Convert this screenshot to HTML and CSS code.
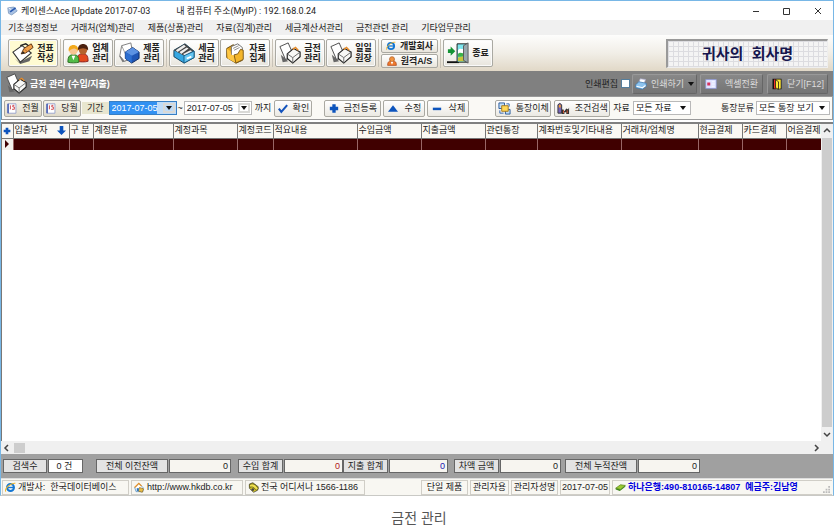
FILE: index.html
```html
<!DOCTYPE html>
<html lang="ko">
<head>
<meta charset="utf-8">
<title>금전 관리</title>
<link rel="stylesheet" href="styles.css">
</head>
<body>
<svg class="defs" aria-hidden="true">
  <symbol id="note" viewBox="0 0 24 24"><path d="M3 18l5 4 14-7-3 6-10 3z" fill="#666"/><path d="M1 11l10-7 10 8-12 10z" fill="#fff" stroke="#333" stroke-width="1.2"/><path d="M9 4l6-2 6 4" fill="none" stroke="#222" stroke-width="1.500"/><path d="M10 13l3-6 8-5 2 4-8 6z" fill="#f0a04a" stroke="#5a3010"/><path d="M10 13l2-3 2 2z" fill="#222"/><path d="M14 8l3 3" stroke="#a75a20"/></symbol>
  <symbol id="people" viewBox="0 0 24 24"><path d="M11 21c0-7 2-8 6-8s6 1 6 8c-3 1-9 1-12 0z" fill="#e2481c" stroke="#822"/><circle cx="17.500" cy="9" r="4.500" fill="#b4622c"/><path d="M12 9C11 0 24 0 23 9c-3-3-8-3-11 0z" fill="#4a200f"/><path d="M1 22c0-7 2-8 6-8s6 1 6 8c-3 1-9 1-12 0z" fill="#52bc48" stroke="#276b20"/><circle cx="7" cy="9" r="4.800" fill="#f6c592"/><path d="M2 10C0 1 14 1 12 10 10 6 6 6 2 10z" fill="#f3a91c"/><path d="M5 15l2 5 2-5z" fill="#fff"/></symbol>
  <symbol id="box3d" viewBox="0 0 24 24"><path d="M1 15l4 7 8-3" fill="#777"/><path d="M4 4l10-3 3 16-10 4-5-6z" fill="#fff" stroke="#777"/><path d="M4 4l5 11" stroke="#999"/><path d="M8 11l8-5 7 5v7l-8 5-7-5z" fill="#1f55b4" stroke="#0b2559"/><path d="M8 11l8-5 7 5-8 4z" fill="#5c92e2"/><path d="M8 11l7 4v8l-7-5z" fill="#2d6fd0"/></symbol>
  <symbol id="drawer" viewBox="0 0 24 24"><path d="M1 9L13 2l10 8v7l-11 6L1 16z" fill="#35a7e2" stroke="#123c58"/><path d="M1 9L13 2l10 8-11 5z" fill="#444"/><path d="M3 9l9-6 2 2-9 6zM7 11l8-5 2 1-8 6zM11 13l8-4 2 1-8 5z" fill="#eee"/><path d="M12 15l11-5v7l-11 6z" fill="#66c6f2" stroke="#155b86"/><path d="M15 18l5-2" stroke="#fff" stroke-width="2"/></symbol>
  <symbol id="folder" viewBox="0 0 24 24"><path d="M3 7l7-4 10 6v11l-7 3L3 17z" fill="#e9a71c" stroke="#60420a"/><path d="M8 5l7-3 5 4v11l-6 3-6-5z" fill="#fff" stroke="#666"/><path d="M10 7l6-3M11 9l6-3" stroke="#888"/><path d="M3 7l4 3 1 4 4 1 1 8-9-5z" fill="#ffc845"/><path d="M11 14l4-1 3-5 3 1v10l-8 4z" fill="#f3b52a" stroke="#795514"/></symbol>
  <symbol id="ledger" viewBox="0 0 24 24"><path d="M2 14l2 8 6-1z" fill="#666"/><path d="M1 5l9-4 7 16-10 2z" fill="#fff" stroke="#444"/><path d="M9 13l7-6 7 4v5l-8 7-6-5z" fill="#f8f8f6" stroke="#222" stroke-width="1.300"/><path d="M9 13l6 4 8-6M15 17v6" fill="none" stroke="#666"/><path d="M15 8l3-2 3 3" fill="none" stroke="#e88b27" stroke-width="1.500"/></symbol>
  <symbol id="ie" viewBox="0 0 16 16"><circle cx="8" cy="8" r="5" fill="none" stroke="#1477d4" stroke-width="3"/><path d="M4 8h9" stroke="#1477d4" stroke-width="2"/><path d="M1 14C-1 9 9 1 15 2" fill="none" stroke="#efb52b" stroke-width="1.500"/></symbol>
  <symbol id="person" viewBox="0 0 16 16"><path d="M1 15c0-6 2-7 7-7s7 1 7 7z" fill="#f07a2c" stroke="#a43c15"/><circle cx="8" cy="5" r="4" fill="#f0933f" stroke="#a5501b"/><path d="M6 9l2 5 2-5z" fill="#fff"/></symbol>
  <symbol id="exit" viewBox="0 0 24 24"><path d="M0 21h13v2H0z" fill="#111"/><path d="M11 2h11v20H11z" fill="#7fe6ee" stroke="#111"/><path d="M12 9c3-4 4 1 7-3v8h-7z" fill="#fff"/><path d="M12 13c3-3 5 1 8-2v5h-8z" fill="#3bb34a"/><path d="M12 17l8-2v6h-8z" fill="#c8c43b"/><path d="M18 4l5-3v22l-5-3z" fill="#9aa8ae" stroke="#555"/><path d="M1 8h3V5l5 5-5 5v-3H1z" fill="#149335"/></symbol>
  <symbol id="calendar" viewBox="0 0 12 14"><path d="M1 1h10v12H1z" fill="#fff" stroke="#8a97c8"/><path d="M1 1v12" stroke="#4860b5" stroke-width="2"/><path d="M4 3v5M9 3H7v2h2v3H6" stroke="#c8262e" fill="none"/></symbol>
  <symbol id="check" viewBox="0 0 12 12"><path d="M1 6l3 4 7-8" fill="none" stroke="#1554bd" stroke-width="2.500"/></symbol>
  <symbol id="plus" viewBox="0 0 12 12"><path d="M4 1h4v3h3v4H8v3H4V8H1V4h3z" fill="#0d54bd"/></symbol>
  <symbol id="up" viewBox="0 0 12 12"><path d="M6 2l6 8H0z" fill="#0d54bd"/></symbol>
  <symbol id="minus" viewBox="0 0 12 12"><path d="M1 5h10v3H1z" fill="#0d54bd"/></symbol>
  <symbol id="transfer" viewBox="0 0 14 14"><path d="M1 1h6v6H1zM8 8h5v5H8z" fill="#bfdcf7" stroke="#285a9b"/><path d="M4 4h7v6H4z" fill="#ffd95a" stroke="#a3781b"/><path d="M2 9v3h4M9 2h3v3" fill="none" stroke="#2a61b1"/></symbol>
  <symbol id="find" viewBox="0 0 14 14"><path d="M1 3q2-3 4 0v9H1z" fill="#7765bd" stroke="#333"/><path d="M2 3h2v3H2z" fill="#f39b2c"/><path d="M5 13V8h2l1 2 2-3 2 1 1-2v7h-3v-2H8v2z" fill="#333"/><path d="M7 9v3M11 9v3" stroke="#e15c34"/></symbol>
  <symbol id="printer" viewBox="0 0 16 16"><path d="M5 6l2-5 7 1-2 6z" fill="#fff" stroke="#aac"/><path d="M1 9l4-4 10 2v4l-5 4-9-2z" fill="#8dc4ef" stroke="#3d78ad"/><path d="M2 11l8 2 4-3" fill="none" stroke="#fff" stroke-width="1.500"/></symbol>
  <symbol id="excel" viewBox="0 0 16 16"><path d="M1 2h14v12H1z" fill="#dfe3ff" stroke="#8c95d0"/><path d="M3 6h4v4H3z" fill="#d8325d"/><path d="M9 5h4M9 8h4M9 11h4" stroke="#fff"/></symbol>
  <symbol id="door" viewBox="0 0 14 16"><path d="M1 1h12v14H1z" fill="#111"/><path d="M3 2h3v12H3z" fill="#f0302c"/><path d="M6 2h6v12l-6 1z" fill="#ffe735"/><path d="M5 2l4 3v10l-4-2z" fill="#ffe735" stroke="#111"/></symbol>
  <symbol id="home" viewBox="0 0 16 16"><path d="M1 8l6-6 6 6v6H3z" fill="#fff" stroke="#387db8"/><path d="M1 8l6-6 4 4" fill="none" stroke="#e4932b" stroke-width="2"/><path d="M8 8l6 2-2 5-6-2z" fill="#e9bf46" stroke="#8d6822"/><path d="M4 9h3v4H4z" fill="#2d76bd"/></symbol>
  <symbol id="phone" viewBox="0 0 16 16"><path d="M2 3l5-2 8 6-1 5-6 3-6-6z" fill="#d5c629" stroke="#333"/><path d="M2 5c4-5 10-1 13 5l-3 2C9 8 6 6 3 8z" fill="#eee052" stroke="#4c4609"/><circle cx="7" cy="11" r="2" fill="#444"/></symbol>
  <symbol id="book" viewBox="0 0 16 12"><path d="M1 7l7-5 7 1-7 6z" fill="#9acb32" stroke="#557c11"/><path d="M1 7v2l6 2 8-6V3L8 9z" fill="#3f861b"/></symbol>
  <symbol id="app" viewBox="0 0 14 12"><path d="M1 2l8-1 4 5-7 5-4-2z" fill="#a9c2e4" stroke="#7b98bd"/><path d="M4 7l7-5" stroke="#2859b0" stroke-width="2"/><path d="M2 2l3 2" stroke="#fff"/></symbol>
</svg>

<main class="window">
  <header class="titlebar">
    <svg class="app-icon"><use href="#app"/></svg>
    <h1>케이센스Ace [Update 2017-07-03</h1>
    <span>내 컴퓨터 주소(MyIP) : 192.168.0.24</span>
    <div class="window-controls">
      <button aria-label="최소화"><svg viewBox="0 0 8 8"><path d="M1 4.500h6"/></svg></button>
      <button aria-label="최대화"><svg viewBox="0 0 8 8"><path d="M.5 1.500h6v6h-6z"/></svg></button>
      <button aria-label="창 닫기"><svg viewBox="0 0 8 8"><path d="M1 1l6 6M7 1L1 7"/></svg></button>
    </div>
  </header>

  <nav class="menubar">
    <a href="#">기초설정정보</a><a href="#">거래처(업체)관리</a><a href="#">제품(상품)관리</a><a href="#">자료(집계)관리</a><a href="#">세금계산서관리</a><a href="#">금전관련 관리</a><a href="#">기타업무관리</a>
  </nav>

  <div class="toolbar">
    <div class="group"><button class="tool active"><svg><use href="#note"/></svg><span>전표<br>작성</span></button></div>
    <div class="group"><button class="tool"><svg><use href="#people"/></svg><span>업체<br>관리</span></button><button class="tool"><svg><use href="#box3d"/></svg><span>제품<br>관리</span></button></div>
    <div class="group"><button class="tool"><svg><use href="#drawer"/></svg><span>세금<br>관리</span></button><button class="tool"><svg><use href="#folder"/></svg><span>자료<br>집계</span></button></div>
    <div class="group"><button class="tool"><svg><use href="#ledger"/></svg><span>금전<br>관리</span></button><button class="tool"><svg><use href="#ledger"/></svg><span>일일<br>원장</span></button></div>
    <div class="group stack"><button class="mini"><svg><use href="#ie"/></svg>개발회사</button><button class="mini"><svg><use href="#person"/></svg>원격A/S</button></div>
    <div class="group"><button class="tool"><svg><use href="#exit"/></svg><span>종료</span></button></div>
    <div class="company">귀사의&nbsp; 회사명</div>
  </div>

  <section class="page-head">
    <svg class="page-icon"><use href="#ledger"/></svg>
    <h2>금전 관리 (수입/지출)</h2>
    <label for="edit">인쇄편집</label><input id="edit" type="checkbox">
    <button class="dark print"><svg><use href="#printer"/></svg>인쇄하기<i class="caret"></i></button>
    <button class="dark export"><svg><use href="#excel"/></svg>엑셀전환</button>
    <button class="dark close"><svg><use href="#door"/></svg>닫기[F12]</button>
  </section>

  <section class="filters">
    <button class="btn tan"><svg><use href="#calendar"/></svg>전월</button>
    <button class="btn tan"><svg><use href="#calendar"/></svg>당월</button>
    <label class="period" for="from">기간</label>
    <span class="combo date picked"><select id="from"><option>2017-07-05</option></select></span>
    <label class="tilde" for="to">~</label>
    <span class="combo date"><select id="to"><option>2017-07-05</option></select></span>
    <span class="until">까지</span>
    <button class="btn confirm"><svg><use href="#check"/></svg>확인</button>
    <div class="actions">
      <button class="btn add"><svg><use href="#plus"/></svg>금전등록</button>
      <button class="btn edit"><svg><use href="#up"/></svg>수정</button>
      <button class="btn edit"><svg><use href="#minus"/></svg>삭제</button>
    </div>
    <div class="lookup">
      <button class="btn wide"><svg><use href="#transfer"/></svg>통장이체</button>
      <button class="btn wide"><svg><use href="#find"/></svg>조건검색</button>
      <label for="data">자료</label>
      <span class="combo data"><select id="data"><option>모든 자료</option></select></span>
    </div>
    <div class="account">
      <label for="book-kind">통장분류</label>
      <span class="combo book"><select id="book-kind"><option>모든 통장 보기</option></select></span>
    </div>
  </section>

  <section class="grid">
    <div class="sheet">
      <table>
        <colgroup><col class="c10"><col class="c56"><col class="c24"><col class="c80"><col class="c64"><col class="c36"><col class="c84"><col class="c64"><col class="c64"><col class="c52"><col class="c84"><col class="c76"><col class="c44"><col class="c44"><col></colgroup>
        <thead><tr><th><svg class="mark"><use href="#plus"/></svg></th><th><span class="sorted">입출날자<svg viewBox="0 0 10 12"><path d="M3 1h4v5h3l-5 5-5-5h3z"/></svg></span></th><th>구 분</th><th>계정분류</th><th>계정과목</th><th>계정코드</th><th>적요내용</th><th>수입금액</th><th>지출금액</th><th>관련통장</th><th>계좌번호및기타내용</th><th>거래처/업체명</th><th>현금결제</th><th>카드결제</th><th>어음결제</th></tr></thead>
        <tbody><tr><td><i class="pointer"></i></td><td></td><td></td><td></td><td></td><td></td><td></td><td></td><td></td><td></td><td></td><td></td><td></td><td></td><td></td></tr></tbody>
      </table>
    </div>
    <div class="vscroll"><svg viewBox="0 0 8 8"><path d="M1 5l3-3 3 3"/></svg><i></i><svg viewBox="0 0 8 8"><path d="M1 3l3 3 3-3"/></svg></div>
    <div class="hscroll"><svg viewBox="0 0 8 8"><path d="M5 1L2 4l3 3"/></svg><i></i><svg viewBox="0 0 8 8"><path d="M3 1l3 3-3 3"/></svg></div>
  </section>

  <dl class="summary">
    <div class="count"><dt>검색수</dt><dd>0 건</dd></div>
    <div class="long"><dt>전체 이전잔액</dt><dd>0</dd></div>
    <div class="short income"><dt>수입 합계</dt><dd>0</dd></div>
    <div class="short spend"><dt>지출 합계</dt><dd>0</dd></div>
    <div class="short diff"><dt>차액 금액</dt><dd>0</dd></div>
    <div class="long"><dt>전체 누적잔액</dt><dd>0</dd></div>
  </dl>

  <footer class="status">
    <span class="s-dev"><svg><use href="#ie"/></svg>개발사: &nbsp;한국데이터베이스</span>
    <span class="s-url"><svg><use href="#home"/></svg>http://www.hkdb.co.kr</span>
    <span class="s-tel"><svg><use href="#phone"/></svg>전국 어디서나 1566-1186</span>
    <span class="s-kind">단일 제품</span>
    <span class="s-role">관리자용</span>
    <span class="s-name">관리자성명</span>
    <span class="s-date">2017-07-05</span>
    <span class="s-bank"><svg><use href="#book"/></svg>하나은행:490-810165-14807 &nbsp;예금주:김남영<svg class="grip" viewBox="0 0 8 8"><path d="M6 0h2v2H6zM3 3h2v2H3zM6 3h2v2H6zM0 6h2v2H0zM3 6h2v2H3zM6 6h2v2H6z"/></svg></span>
  </footer>
</main>
<p class="caption">금전 관리</p>
</body>
</html>
```
FILE: styles.css
```css
* { box-sizing: border-box; }
body { margin: 0; background: #fff; color: #222; font: 9px/12px "Liberation Sans", "Noto Sans CJK KR", sans-serif; white-space: nowrap; }
button, select, input { font: inherit; color: inherit; margin: 0; padding: 0; }
button { display: flex; align-items: center; justify-content: center; }
svg { flex: none; }
.defs { display: none; }
h1, h2, dl, dd, p { margin: 0; }
.window { border: 1px solid #78b7e6; border-bottom: 1px solid #c9c9c5; margin-right: 1px; }

.titlebar { display: flex; align-items: center; height: 19px; padding: 0 7px 0 6px; font-family: Roboto, "Noto Sans CJK KR", sans-serif; }
.titlebar h1 { font: inherit; margin: 0 26px 0 3px; }
.app-icon { width: 11px; height: 10px; }
.window-controls { display: flex; margin-left: auto; gap: 15px; }
.window-controls button { width: 16px; height: 14px; border: 0; background: none; }
.window-controls svg { width: 8px; height: 8px; fill: none; stroke: #333; }

.menubar { display: flex; gap: 13px; height: 15px; padding: 0 7px; background: #f0f0f0; align-items: center; }
.menubar a { color: #222; text-decoration: none; }

.toolbar { display: flex; align-items: center; height: 36px; padding: 0 5px 0 7px; background: linear-gradient(#fdfdfc, #f1eee7 50%, #e1d8c7); }
.group { display: flex; gap: 1px; padding-right: 2px; margin-right: 2px; border-right: 1px solid #c9c3b8; }
.group:nth-last-child(2) { border: 0; }
.tool { width: 50px; height: 28px; gap: 3px; border: 1px solid #aaa9a2; border-radius: 2px; background: linear-gradient(#fff, #f4f3ef 60%, #e8e5dd); font-weight: bold; line-height: 10px; box-shadow: inset 0 0 0 1px #fafafa; }
.tool svg { width: 22px; height: 22px; }
.tool.active { background: #fffbd2; }
.stack { flex-direction: column; gap: 1px; }
.mini { width: 57px; height: 14px; gap: 4px; border: 1px solid #aaa9a2; border-radius: 2px; background: linear-gradient(#fff, #e9e5dc); font-weight: bold; }
.mini svg { width: 10px; height: 10px; }
.company { flex: none; width: 162px; height: 29px; margin-left: auto; border: 1px solid #eee; border-top: 2px solid #999; border-left: 2px solid #999; background: repeating-linear-gradient(90deg, #dcdce0 0 1px, transparent 1px 5px), repeating-linear-gradient(#dcdce0 0 1px, #f4f4f4 1px 5px); color: #16164e; font-size: 15px; font-weight: bold; line-height: 26px; text-align: center; }

.page-head { display: flex; align-items: center; height: 25px; padding: 0 5px; background: #808080; }
.page-icon { width: 21px; height: 21px; }
.page-head h2 { margin: 0 auto 0 3px; color: #fff; font-size: 9px; }
.page-head input { appearance: none; width: 9px; height: 9px; margin: 0 2px 0 3px; border: 1px solid #557e9c; background: #fff; }
.dark { height: 20px; gap: 4px; border: 1px solid #666; border-top-color: #999; border-left-color: #999; border-radius: 2px; background: linear-gradient(#888, #747474); color: #ddd; }
.dark svg { width: 12px; height: 12px; }
.print { width: 65px; margin-right: 3px; }
.export { width: 63px; margin-right: 4px; gap: 8px; }
.close { width: 61px; }
.caret, .combo::after { border: 3px solid transparent; border-top: 4px solid #111; border-bottom: 0; }

.filters { display: flex; align-items: center; height: 24px; padding: 0 2px; border: 1px solid #999; border-left: 1px solid #6b8fa8; background: #faf9f5; }
.btn { height: 17px; gap: 5px; border: 1px solid #aaa9a2; border-radius: 2px; background: linear-gradient(#fff, #ebe9e3); }
.btn svg { width: 10px; height: 11px; }
.tan { width: 38px; margin-right: 1px; background: linear-gradient(#f6f3e9, #dfdac9); }
.period { padding: 0 5px; background: #e8e6cf; }
.combo { display: flex; align-items: center; position: relative; border: 1px solid #b9b9b9; background: #fff; }
.combo select { appearance: none; width: 100%; height: 12px; border: 0; padding: 0 2px; background: none; }
.combo::after { content: ""; position: absolute; right: 4px; pointer-events: none; }
.date { width: 68px; }
.date::after { outline: 2px solid #d9d9d6; outline-offset: 1px; }
.picked { border-color: #377fc4; background: linear-gradient(90deg, #3291f2 47px, #bfdcf8 47px); color: #fff; }
.tilde { padding: 0 1px; }
.until { margin: 0 3px; }
.confirm { width: 38px; }
.actions { display: flex; gap: 2px; margin-left: 12px; }
.add { width: 57px; }
.edit { width: 42px; gap: 7px; }
.lookup { display: flex; align-items: center; gap: 3px; margin-left: auto; }
.wide { width: 56px; }
.wide svg { width: 13px; height: 13px; }
.data { width: 58px; }
.account { display: flex; align-items: center; gap: 2px; margin-left: 30px; }
.book { width: 74px; }

.grid { display: grid; grid-template-columns: minmax(0, 1fr) 12px; border-top: 2px solid #808080; margin-top: 2px; }
.sheet { height: 317px; overflow: hidden; border-left: 1px solid #777; }
table { width: 100%; table-layout: fixed; border-collapse: collapse; }
th { height: 14px; padding: 0 0 0 1px; overflow: hidden; border-right: 1px solid #777; border-bottom: 1px solid #777; background: #faf8f3; font-weight: normal; text-align: left; line-height: 13px; }
td { height: 12px; padding: 0; border-right: 1px solid #966; background: #400000; }
td:first-child { background: #f4f1ec; }
th:last-child, td:last-child { border-right: 0; }
.c10 { width: 11px; } .c24 { width: 24px; } .c36 { width: 36px; } .c44 { width: 44px; } .c52 { width: 52px; } .c56 { width: 56px; } .c64 { width: 64px; } .c76 { width: 77px; } .c80 { width: 80px; } .c84 { width: 84px; }
.mark { display: block; width: 8px; height: 8px; }
.sorted { display: flex; align-items: center; justify-content: space-between; padding-right: 3px; }
.sorted svg { width: 9px; height: 11px; fill: #0d54bd; }
.pointer { display: block; width: 0; margin-left: 3px; border: 4px solid transparent; border-left: 4px solid #400000; border-right: 0; }
.vscroll, .hscroll { display: flex; align-items: center; justify-content: space-between; background: #f0f0f0; }
.vscroll { flex-direction: column; padding: 3px 0; }
.vscroll i { width: 10px; flex: 1; margin: 3px 0; background: #cdcdcd; }
.hscroll { grid-column: 1 / -1; height: 13px; padding: 0 13px 0 2px; }
.hscroll i { width: 11px; height: 10px; margin: 0 auto 0 3px; background: #cdcdcd; }
.grid > div > svg { width: 8px; height: 8px; fill: none; stroke: #444; stroke-width: 1.5; }

.summary { display: flex; align-items: center; height: 24px; padding: 0 2px; background: #a0a0a0; }
.summary div { display: flex; gap: 1px; }
.summary dt, .summary dd { height: 14px; border: 1px solid #666; line-height: 12px; text-align: center; }
.summary dt { background: #e3e3e3; }
.summary dd { padding-right: 2px; background: #f7f5f0; text-align: right; }
.count { margin-right: 13px; } .count dt { width: 44px; } .count dd { width: 35px; text-align: center; background: #fff; }
.long { margin-right: 7px; } .long dt { width: 72px; } .long dd { width: 62px; }
.short dt { width: 45px; } .short dd { width: 59px; }
.income dd { color: #b01818; } .spend dd { color: #1818b0; }
.spend { margin-right: 6px; } .diff { margin-right: 4px; } .diff dd { width: 61px; }

.status { display: flex; height: 17px; align-items: center; gap: 2px; padding: 0 1px; border-top: 1px solid #ddd; background: #f8f7f2; }
.status span { display: flex; align-items: center; gap: 2px; height: 15px; padding: 0 2px; border: 1px solid #d0cec7; }
.status svg { width: 11px; height: 11px; }
.s-dev { width: 127px; } .s-url { width: 112px; } .s-tel { width: 120px; }
.status .s-kind { width: 47px; margin-left: auto; } .s-role { width: 39px; } .s-name { width: 47px; } .s-date { width: 50px; }
.status .s-kind, .status .s-role, .status .s-name, .status .s-date { justify-content: center; padding: 0; }
.status .s-bank { width: 220px; border-right: 0; color: #0000e0; font-weight: bold; }
.status .grip { width: 7px; height: 7px; margin: 5px 0 0 auto; fill: #bbb; }
.caption { margin-top: 12px; padding-left: 3px; color: #555; text-align: center; font-size: 14px; line-height: 20px; }
```
